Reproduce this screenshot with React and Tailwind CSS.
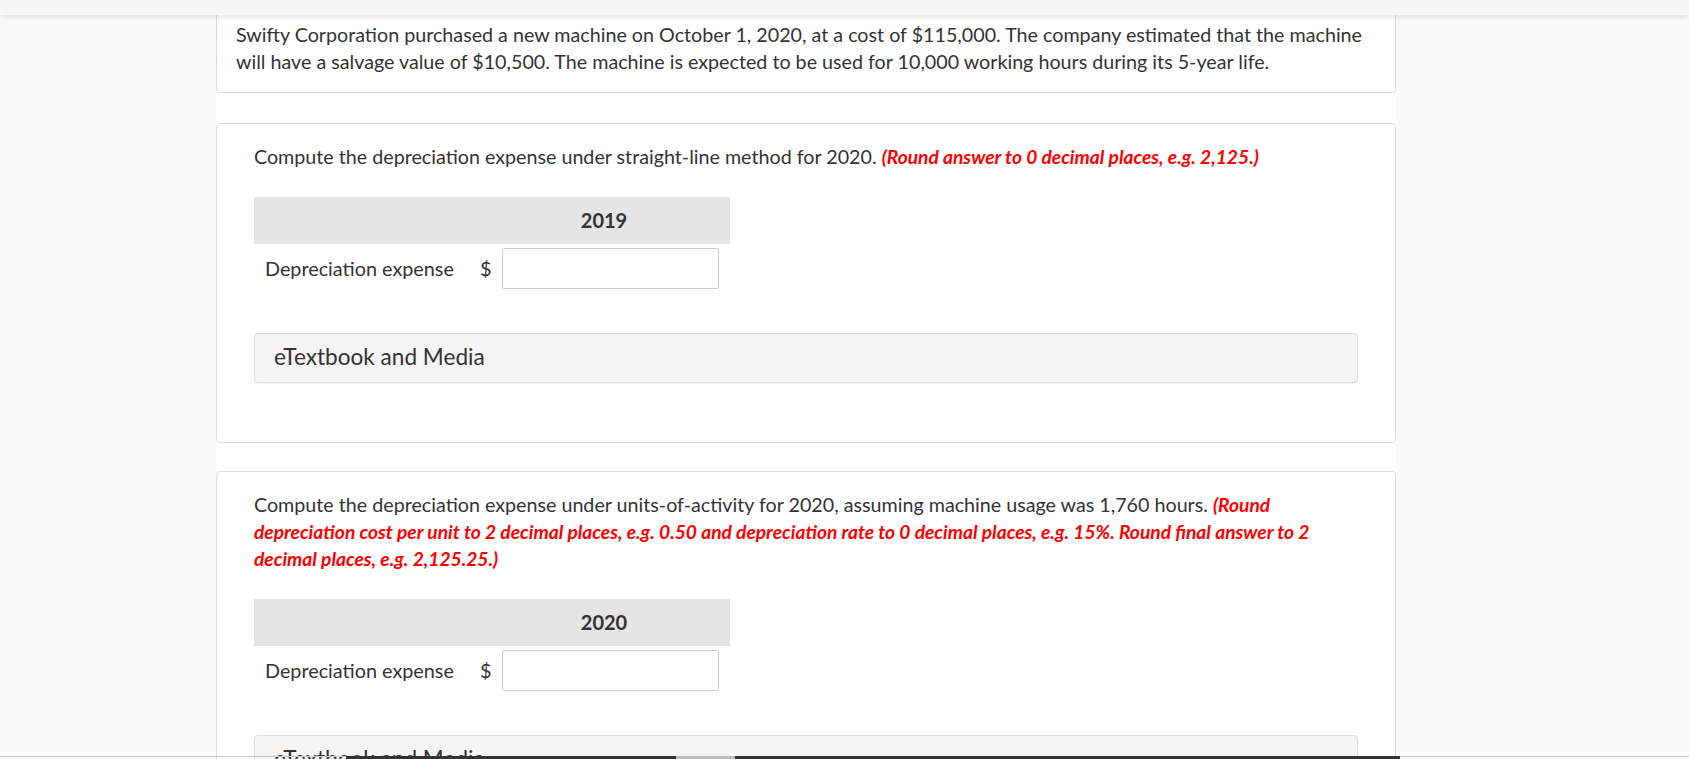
export default function App() {
  const font = { fontFamily: "Lato, 'Noto Sans', sans-serif" };
  const Table = ({ year }) => (
    <div className="w-[476px]">
      <div className="flex h-[47px] items-center bg-[#e5e5e5]">
        <div className="w-[224px]" />
        <div className="w-[252px] text-center font-bold text-[20px] leading-[27px] text-[#333]">{year}</div>
      </div>
      <div className="flex h-[49px] items-center">
        <div className="w-[226px] pl-[11px] text-[19.8px] leading-[27px]">Depreciation expense</div>
        <div className="w-[22px] text-[20px] leading-[27px]">$</div>
        <div className="h-[41px] w-[217px] rounded-[2px] border border-[#cccccc] bg-white" />
      </div>
    </div>
  );
  const Media = () => (
    <div className="rounded-[4px] border border-[#dddddd] bg-[#f4f4f4] px-[19px] pt-[8px] pb-[10px] text-[22.6px] leading-[30px] shadow-[0_1px_1px_rgba(0,0,0,0.06)]">
      eTextbook and Media
    </div>
  );
  return (
    <div className="relative min-h-screen bg-[#fafafa] text-[#333333]" style={font}>
      <div className="relative z-10 h-[15px] w-full bg-[#f5f5f5] shadow-[0_2px_6px_rgba(0,0,0,0.12)]" />
      <div className="ml-[216px] w-[1180px] bg-white pb-[40px]">
        <div className="rounded-b-[4px] border border-t-0 border-[#dddddd] px-[19px] pt-[6px] pb-[17px] text-[19.7px] leading-[27px]">
          Swifty Corporation purchased a new machine on October 1, 2020, at a cost of $115,000. The company estimated that the machine will have a salvage value of $10,500. The machine is expected to be used for 10,000 working hours during its 5-year life.
        </div>
        <div className="mt-[30px] rounded-[4px] border border-[#dddddd] px-[37px] pt-[19px] pb-[59px]">
          <p className="text-[19.7px] leading-[27px]">
            Compute the depreciation expense under straight-line method for 2020.{" "}
            <span className="text-[19.2px] font-bold italic text-[#ff0000]">(Round answer to 0 decimal places, e.g. 2,125.)</span>
          </p>
          <div className="mt-[27px]">
            <Table year="2019" />
          </div>
          <div className="mt-[40px]">
            <Media />
          </div>
        </div>
        <div className="mt-[28px] rounded-[4px] border border-[#dddddd] px-[37px] pt-[19px] pb-[59px]">
          <p className="text-[19.7px] leading-[27px]">
            Compute the depreciation expense under units-of-activity for 2020, assuming machine usage was 1,760 hours.{" "}
            <span className="text-[19.2px] font-bold italic text-[#ff0000]">(Round depreciation cost per unit to 2 decimal places, e.g. 0.50 and depreciation rate to 0 decimal places, e.g. 15%. Round final answer to 2 decimal places, e.g. 2,125.25.)</span>
          </p>
          <div className="mt-[27px]">
            <Table year="2020" />
          </div>
          <div className="mt-[40px]">
            <Media />
          </div>
        </div>
      </div>
      <div className="fixed inset-x-0 bottom-0 z-20 flex h-[3px] items-start">
        <div className="h-[1px] w-[346px] bg-[#c8c8c8]" />
        <div className="h-[3px] w-[330px] bg-[#333333]" />
        <div className="h-[3px] w-[59px] bg-[#bdbdbd]" />
        <div className="h-[3px] w-[665px] bg-[#333333]" />
        <div className="h-[1px] flex-1 bg-[#c8c8c8]" />
      </div>
    </div>
  );
}
